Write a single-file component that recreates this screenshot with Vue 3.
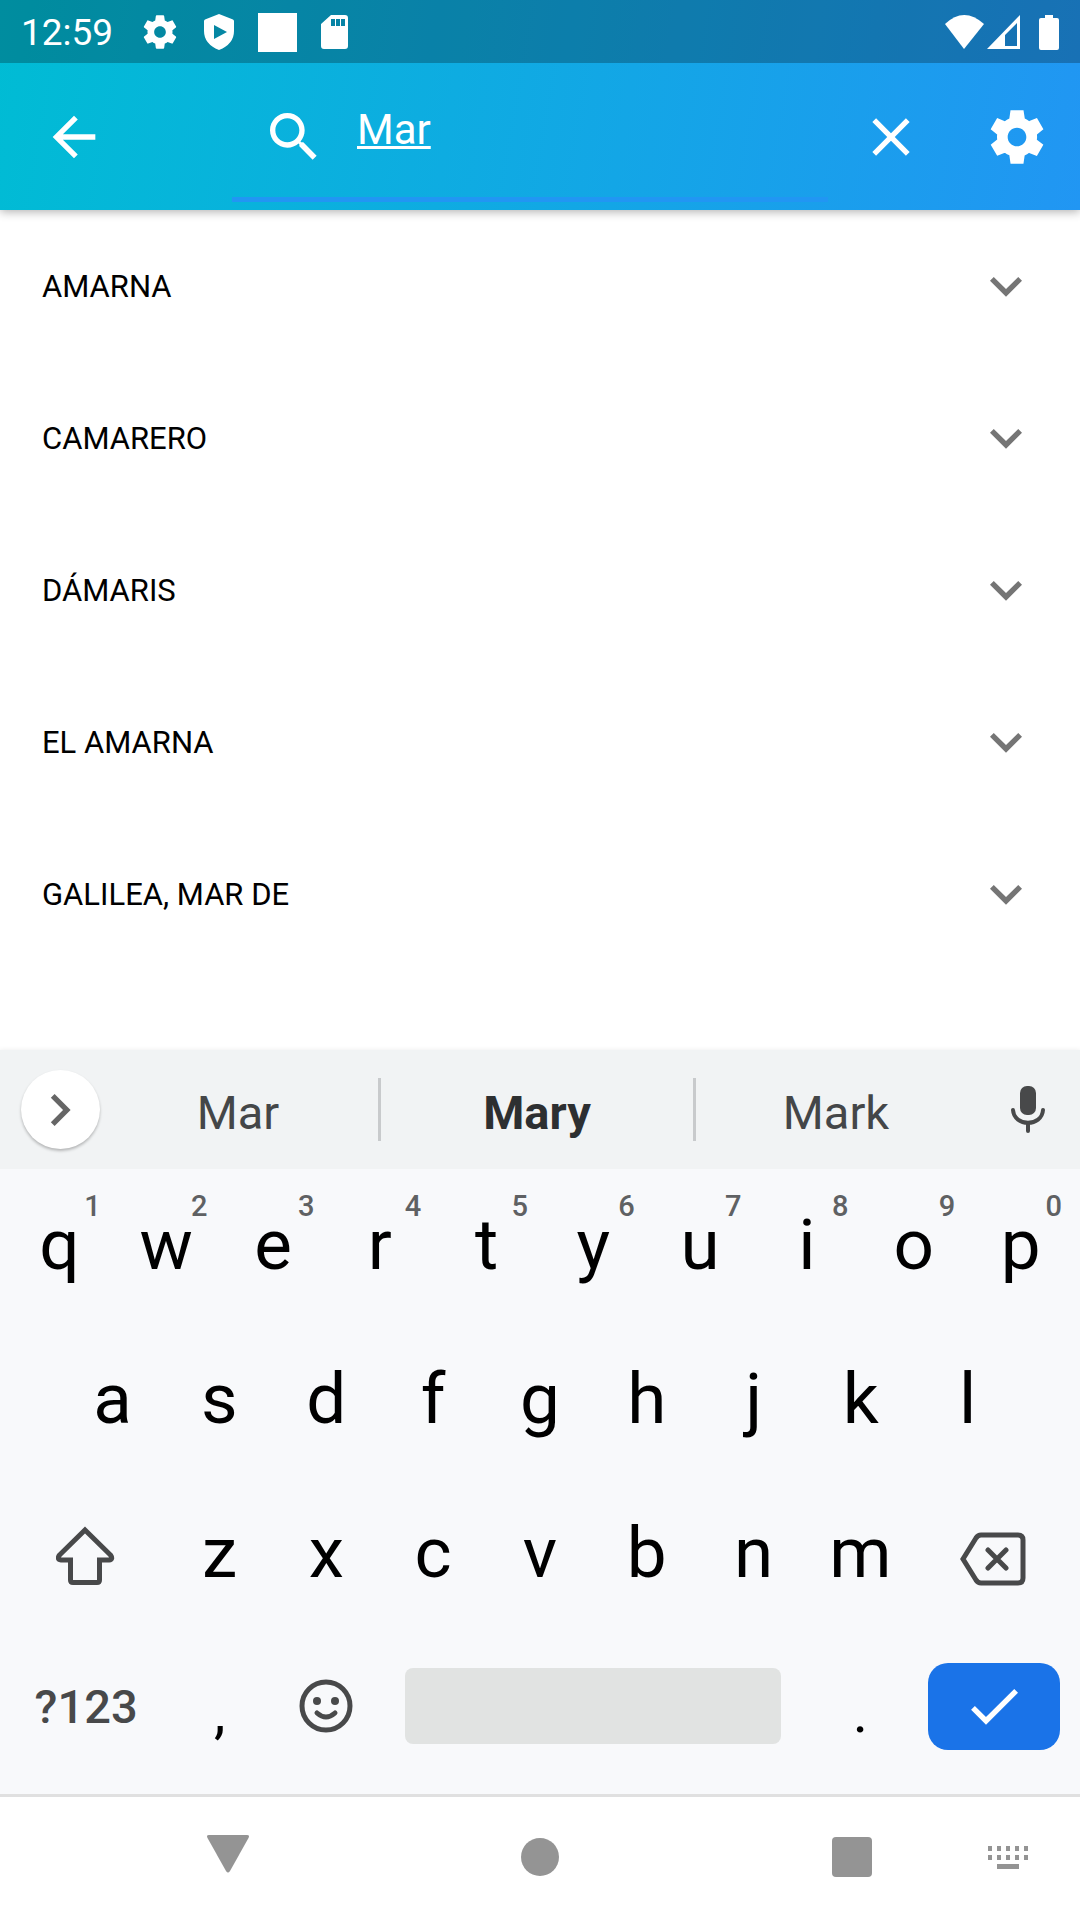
<script setup>
import { ref } from 'vue'

const query = ref('Mar')
const results = ['AMARNA', 'CAMARERO', 'DÁMARIS', 'EL AMARNA', 'GALILEA, MAR DE']
const topRow = [...'qwertyuiop'].map((letter, i) => ({ letter, hint: (i + 1) % 10 }))
const middleRow = [...'asdfghjkl']
const bottomRow = [...'zxcvbnm']

const gear =
  'M19.43 12.98c.04-.32.07-.64.07-.98s-.03-.66-.07-.98l2.11-1.65c.19-.15.24-.42.12-.64l-2-3.46c-.12-.22-.39-.3-.61-.22l-2.49 1c-.52-.4-1.08-.73-1.69-.98l-.38-2.65C14.46 2.18 14.25 2 14 2h-4c-.25 0-.46.18-.49.42l-.38 2.65c-.61.25-1.17.59-1.69.98l-2.49-1c-.23-.09-.49 0-.61.22l-2 3.46c-.13.22-.07.49.12.64l2.11 1.65c-.04.32-.07.65-.07.98s.03.66.07.98l-2.11 1.65c-.19.15-.24.42-.12.64l2 3.46c.12.22.39.3.61.22l2.49-1c.52.4 1.08.73 1.69.98l.38 2.65c.03.24.24.42.49.42h4c.25 0 .46-.18.49-.42l.38-2.65c.61-.25 1.17-.59 1.69-.98l2.49 1c.23.09.49 0 .61-.22l2-3.46c.12-.22.07-.49-.12-.64l-2.11-1.65zM12 15.5c-1.93 0-3.5-1.57-3.5-3.5s1.57-3.5 3.5-3.5 3.5 1.57 3.5 3.5-1.57 3.5-3.5 3.5z'
const sharpGear =
  'M19.44 12.99l.01-.02c.04-.32.08-.64.08-.98 0-.34-.03-.66-.07-.99l.01.02 2.44-1.92-2.43-4.22-2.87 1.16.01.01c-.52-.4-1.09-.74-1.71-1h.01L14.44 2H9.57l-.44 3.07h.01c-.62.26-1.19.6-1.71 1l.01-.01-2.88-1.17-2.44 4.22 2.44 1.92.01-.02c-.04.33-.07.65-.07.99 0 .34.03.66.08.98l-.01-.02-2.1 1.65-.33.26 2.43 4.2 2.88-1.15-.02-.04c.53.41 1.1.75 1.73 1.01h-.03L9.58 22h4.85s.03-.18.06-.42l.38-2.65h-.01c.62-.26 1.2-.6 1.73-1.01l-.02.04 2.88 1.15 2.43-4.2s-.14-.12-.33-.26l-2.11-1.66zM12 15.5c-1.93 0-3.5-1.57-3.5-3.5s1.57-3.5 3.5-3.5 3.5 1.57 3.5 3.5-1.57 3.5-3.5 3.5z'
</script>

<template>
  <div class="screen">
    <header class="top">
      <div class="status">
        <time class="clock">12:59</time>
        <div class="notices">
          <svg width="40" height="40" viewBox="0 0 24 24"><path :d="gear" /></svg>
          <svg width="30" height="36" viewBox="0 0 30 36">
            <path fill-rule="evenodd" d="M15 0L29 5.5Q30 6 30 7V17Q30 30 15 36Q0 30 0 17V7Q0 6 1 5.5ZM10 11V25L23 18Z" />
          </svg>
          <svg width="39" height="39" viewBox="0 0 39 39"><path d="M0 0H39V39H0Z" /></svg>
          <svg width="28" height="34" viewBox="0 0 28 34">
            <path fill-rule="evenodd" d="M10 0H24Q27 0 27 3V31Q27 34 24 34H3Q0 34 0 31V9ZM10 4V11H14V4ZM15 4V11H19V4ZM20 4V11H24V4Z" />
          </svg>
        </div>
        <div class="signals">
          <svg width="39" height="34" viewBox="0 0 39 34"><path d="M0 9Q19 -9 39 9L19 34Z" /></svg>
          <svg width="33" height="34" viewBox="0 0 33 34">
            <path fill-rule="evenodd" d="M33 0V34H0ZM30 8L18 20V31H30Z" />
          </svg>
          <svg class="battery" width="20" height="35" viewBox="0 0 20 35">
            <path d="M6 0H14V3H18Q20 3 20 5V33Q20 35 18 35H2Q0 35 0 33V5Q0 3 2 3H6Z" />
          </svg>
        </div>
      </div>
      <div class="toolbar">
        <button class="back" aria-label="Back">
          <svg width="64" height="64" viewBox="0 0 24 24">
            <path d="M20 11H7.83l5.59-5.59L12 4l-8 8 8 8 1.41-1.41L7.83 13H20v-2z" />
          </svg>
        </button>
        <label class="search">
          <svg width="64" height="64" viewBox="0 0 24 24">
            <path d="M15.5 14h-.79l-.28-.27C15.41 12.59 16 11.11 16 9.5 16 5.91 13.09 3 9.5 3S3 5.91 3 9.5 5.91 16 9.5 16c1.61 0 3.09-.59 4.23-1.57l.27.28v.79l5 4.99L20.49 19l-4.99-5zm-6 0C7.01 14 5 11.99 5 9.5S7.01 5 9.5 5 14 7.01 14 9.5 11.99 14 9.5 14z" />
          </svg>
          <input v-model="query" type="text" aria-label="Search" />
        </label>
        <button class="action" aria-label="Clear" @click="query = ''">
          <svg width="64" height="64" viewBox="0 0 24 24">
            <path d="M19 6.41L17.59 5 12 10.59 6.41 5 5 6.41 10.59 12 5 17.59 6.41 19 12 13.41 17.59 19 19 17.59 13.41 12z" />
          </svg>
        </button>
        <button class="action" aria-label="Settings">
          <svg width="64" height="64" viewBox="0 0 24 24"><path :d="sharpGear" /></svg>
        </button>
      </div>
    </header>

    <main class="results">
      <button v-for="name in results" :key="name" class="result">
        <span>{{ name }}</span>
        <svg width="64" height="64" viewBox="0 0 24 24">
          <path d="M16.59 8.59L12 13.17 7.41 8.59 6 10l6 6 6-6z" />
        </svg>
      </button>
    </main>

    <section class="keyboard">
      <div class="suggestions">
        <div class="side">
          <button class="expand" aria-label="More">
            <svg width="64" height="64" viewBox="0 0 24 24">
              <path d="M9.600 6L8.190 7.410 12.770 12l-4.580 4.590L9.600 18l6-6z" />
            </svg>
          </button>
        </div>
        <button class="word">Mar</button>
        <button class="word best">Mary</button>
        <button class="word">Mark</button>
        <button class="side mic" aria-label="Voice input">
          <svg width="34" height="47" viewBox="0 0 34 47">
            <rect x="9" y="0" width="16" height="29" rx="7" fill="#48494a" />
            <path d="M2 24C3 41 31 41 32 24M17 38V45" fill="none" stroke="#48494a" stroke-width="4" stroke-linecap="round" />
          </svg>
        </button>
      </div>

      <div class="keys">
        <div class="row">
          <button v-for="k in topRow" :key="k.letter" class="key">
            {{ k.letter }}<span class="hint">{{ k.hint }}</span>
          </button>
        </div>
        <div class="row inset">
          <button v-for="k in middleRow" :key="k" class="key">{{ k }}</button>
        </div>
        <div class="row">
          <button class="key wide" aria-label="Shift">
            <svg width="60" height="68" viewBox="0 0 60 68">
              <path d="M29 12L54.500 37Q57.500 41.500 53 42H43.500V62Q43.500 64.500 41 64.500H17Q14.500 64.500 14.500 62V42H5Q.5 41.500 3.500 37Z" />
            </svg>
          </button>
          <button v-for="k in bottomRow" :key="k" class="key">{{ k }}</button>
          <button class="key wide" aria-label="Backspace">
            <svg width="68" height="68" viewBox="0 0 68 68">
              <path d="M3 41L16 20Q18 17 21 17H58Q63 17 63 22V60Q63 65 58 65H21Q18 65 16 62ZM28 32L46 50M46 32L28 50" />
            </svg>
          </button>
        </div>
        <div class="row">
          <button class="key wide symbols">?123</button>
          <button class="key mark">,</button>
          <button class="key" aria-label="Emoji">
            <svg width="54" height="54" viewBox="0 0 54 54">
              <circle cx="27" cy="27" r="24" />
              <path d="M18 34Q27 42 36 34" />
              <circle class="eye" cx="18" cy="22" r="4" />
              <circle class="eye" cx="36" cy="22" r="4" />
            </svg>
          </button>
          <button class="key space" aria-label="Space"><span></span></button>
          <button class="key mark">.</button>
          <button class="key wide enter" aria-label="Done">
            <span>
              <svg width="64" height="64" viewBox="0 0 24 24">
                <path d="M9 16.170L4.830 12l-1.420 1.410L9 19 21 7l-1.410-1.410z" />
              </svg>
            </span>
          </button>
        </div>
      </div>
    </section>

    <nav class="system">
      <button class="nav-back" aria-label="Hide keyboard">
        <svg width="42" height="38" viewBox="0 0 42 38">
          <path d="M2 0H40Q43 0 41.500 3L23 36Q21 39 19 36L.5 3Q-1 0 2 0Z" />
        </svg>
      </button>
      <button class="nav-home" aria-label="Home">
        <svg width="38" height="38" viewBox="0 0 38 38"><circle cx="19" cy="19" r="19" /></svg>
      </button>
      <button class="nav-recents" aria-label="Recents">
        <svg width="40" height="40" viewBox="0 0 40 40"><rect width="40" height="40" rx="4" /></svg>
      </button>
      <button class="nav-ime" aria-label="Switch keyboard">
        <svg width="40" height="23" viewBox="0 0 40 23">
          <path d="M0 0h4v5h-4zM9 0h4v5h-4zM18 0h4v5h-4zM27 0h4v5h-4zM36 0h4v5h-4zM0 9h4v5h-4zM9 9h4v5h-4zM18 9h4v5h-4zM27 9h4v5h-4zM36 9h4v5h-4zM9 18h22v5h-22z" />
        </svg>
      </button>
    </nav>
  </div>
</template>

<style>
body {
  margin: 0;
  background: #fff;
}
</style>

<style scoped>
.screen {
  display: flex;
  flex-direction: column;
  min-height: 100vh;
  background: #fff;
  font-family: Roboto, "Noto Sans", sans-serif;
}
button {
  display: flex;
  align-items: center;
  justify-content: center;
  margin: 0;
  padding: 0;
  border: 0;
  background: none;
  color: inherit;
  font: inherit;
}
svg {
  display: block;
  flex: none;
}

.top {
  background: linear-gradient(100deg, #00bcd4, #2196f3);
  box-shadow: 0 2px 9px rgba(0, 0, 0, 0.3);
  color: #fff;
}
.top svg {
  fill: #fff;
}
.status {
  display: flex;
  box-sizing: border-box;
  align-items: center;
  height: 63px;
  padding: 1px 21px 0;
  background: rgba(0, 0, 0, 0.25);
}
.clock {
  font-size: 37px;
}
.notices {
  display: flex;
  align-items: center;
  gap: 24px;
  margin-left: 27px;
}
.signals {
  display: flex;
  align-items: center;
  gap: 3px;
  margin-left: auto;
}
.battery {
  margin-left: 16px;
}
.toolbar {
  display: flex;
  height: 147px;
}
.back {
  width: 147px;
}
.search {
  position: relative;
  display: flex;
  flex: 1;
  align-items: center;
  gap: 31px;
  min-width: 0;
  margin-left: 85px;
  padding-left: 30px;
}
.search::after {
  position: absolute;
  right: 0;
  bottom: 8px;
  left: 0;
  height: 5px;
  background: #2196f3;
  content: "";
}
.search input {
  flex: 1;
  min-width: 0;
  padding: 0 0 14px;
  border: 0;
  outline: 0;
  background: none;
  color: #fff;
  font: 42px Roboto, "Noto Sans", sans-serif;
  text-decoration: underline;
  text-decoration-thickness: 3px;
  text-decoration-skip-ink: none;
  text-underline-offset: 2px;
}
.action {
  width: 126px;
}

.results {
  flex: 1;
  padding-bottom: 80px;
}
.result {
  justify-content: space-between;
  width: 100%;
  height: 152px;
  padding: 0 42px;
  color: #000;
  font-size: 31px;
}
.result svg {
  fill: #757575;
}

.suggestions {
  display: flex;
  height: 119px;
  background: #f1f3f4;
  box-shadow: 0 0 5px rgba(0, 0, 0, 0.08);
}
.side {
  display: flex;
  align-items: center;
  flex: none;
  width: 98px;
}
.mic {
  width: 104px;
}
.expand {
  flex: none;
  width: 79px;
  height: 79px;
  margin-left: 21px;
  border-radius: 50%;
  background: #fff;
  box-shadow: 0 2px 3px rgba(0, 0, 0, 0.25);
}
.expand svg {
  fill: #666;
}
.word {
  flex: 280;
  color: #444648;
  font-size: 47px;
  padding-top: 6px;
}
.best {
  position: relative;
  flex: 318;
  color: #2d2f31;
  font-weight: 700;
}
.best::before,
.best::after {
  position: absolute;
  top: 28px;
  bottom: 28px;
  width: 3px;
  background: #c8cacc;
  content: "";
}
.best::before {
  left: 0;
}
.best::after {
  right: 0;
}

.keys {
  padding: 0 6px 9px;
  border-bottom: 3px solid #e0e0e0;
  background: #f8f9fb;
}
.row {
  display: flex;
  height: 154px;
}
.inset {
  padding: 0 53px;
}
.key {
  position: relative;
  flex: 2 1 0;
  min-width: 0;
  padding-bottom: 4px;
  color: #000;
  font-size: 71px;
}
.key svg {
  fill: none;
  stroke: #48494a;
  stroke-width: 5;
  stroke-linecap: round;
}
.key .eye {
  fill: #48494a;
  stroke: none;
}
.wide {
  flex-grow: 3;
}
.mark {
  padding: 8px 0 0;
  font-size: 58px;
}
.hint {
  position: absolute;
  top: 20px;
  right: 12px;
  color: #5f6163;
  font-size: 29px;
  font-weight: 500;
  line-height: 34px;
}
.symbols {
  color: #48494a;
  font-size: 47px;
  font-weight: 500;
}
.space {
  flex-grow: 8;
}
.space span {
  width: 88%;
  height: 76px;
  border-radius: 8px;
  background: #e1e3e2;
}
.enter span {
  display: flex;
  align-items: center;
  justify-content: center;
  width: 82%;
  height: 87px;
  border-radius: 20px;
  background: #1a73e8;
}
.key.enter svg {
  fill: #fff;
  stroke: none;
}

.system {
  display: grid;
  grid-template-columns: 180fr 96px 216fr 96px 216fr 96px 60fr 96px 24fr;
  height: 120px;
  padding-bottom: 3px;
}
.system svg {
  fill: #949494;
}
.nav-back {
  grid-column: 2;
  padding-bottom: 6px;
}
.nav-home {
  grid-column: 4;
}
.nav-recents {
  grid-column: 6;
}
.nav-ime {
  grid-column: 8;
}
</style>
